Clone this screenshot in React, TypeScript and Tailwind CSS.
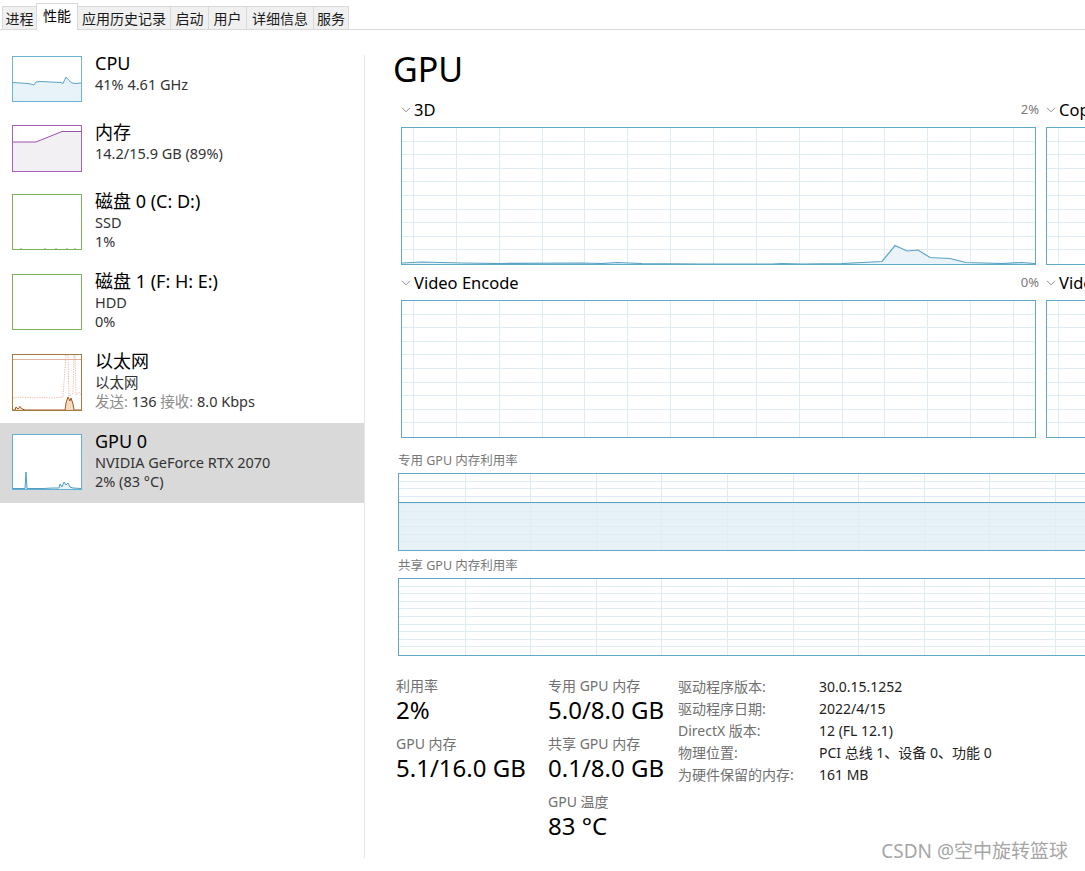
import React from "react"

const FONT = "font-['Noto_Sans','Noto_Sans_CJK_SC',sans-serif]"

const tabs = [
  { label: "进程", w: "w-[35px]" },
  { label: "性能", w: "w-[42px]", active: true },
  { label: "应用历史记录", w: "w-[94px]" },
  { label: "启动", w: "w-[39px]" },
  { label: "用户", w: "w-[39px]" },
  { label: "详细信息", w: "w-[68px]" },
  { label: "服务", w: "w-[36px]" },
]

function Tabs() {
  return (
    <div className="flex h-[30px] items-end border-b border-[#d9d9d9] pl-[2px]">
      {tabs.map((t) =>
        t.active ? (
          <div
            key={t.label}
            className={`${t.w} relative z-10 -mb-px -ml-px flex h-[27px] items-start justify-center border border-b-0 border-[#d9d9d9] bg-white pt-[3px] text-[14px] leading-[18px] text-black`}
          >
            {t.label}
          </div>
        ) : (
          <div
            key={t.label}
            className={`${t.w} -ml-px flex h-[23px] items-start justify-center border border-b-0 border-[#d9d9d9] bg-[#f0f0f0] pt-[3px] text-[14px] leading-[18px] text-[#1a1a1a] first:ml-0`}
          >
            {t.label}
          </div>
        )
      )}
    </div>
  )
}

function pts(p: number[][]) {
  return p.map((q) => q.join(",")).join(" ")
}

function CpuThumb() {
  const line = [
    [0, 25.5], [8, 26], [14, 26.5], [18, 27], [21, 28], [23, 25], [28, 24.5], [38, 25], [48, 25.5],
    [50, 26.5], [53, 20], [56, 23.5], [59, 26], [63, 26.5], [68, 26],
  ]
  return (
    <div className="h-[46px] w-[70px] border border-[#6db3d6] bg-white">
      <svg viewBox="0 0 68 44" className="block h-full w-full" preserveAspectRatio="none">
        <polygon points={pts([...line, [68, 44], [0, 44]])} fill="#e8f2f9" />
        <polyline points={pts(line)} fill="none" stroke="#5aa4c8" strokeWidth="1" />
      </svg>
    </div>
  )
}

function MemThumb() {
  const line = [[0, 16], [23, 16], [49, 5.5], [68, 5.5]]
  return (
    <div className="h-[47px] w-[70px] border border-[#a35fba] bg-white">
      <svg viewBox="0 0 68 45" className="block h-full w-full" preserveAspectRatio="none">
        <polygon points={pts([...line, [68, 45], [0, 45]])} fill="#f3f0f4" />
        <polyline points={pts(line)} fill="none" stroke="#9b50b3" strokeWidth="1" />
      </svg>
    </div>
  )
}

function DiskThumb({ ticks }: { ticks: number[] }) {
  return (
    <div className="h-[56px] w-[70px] border border-[#7db358] bg-white">
      <svg viewBox="0 0 68 54" className="block h-full w-full" preserveAspectRatio="none">
        {ticks.map((x) => (
          <line key={x} x1={x} x2={x} y1={53} y2={54} stroke="#7db358" strokeWidth="1" />
        ))}
      </svg>
    </div>
  )
}

function NetThumb() {
  const recv = [
    [0, 55], [2, 55], [3, 52], [5, 54], [7, 51.5], [9, 54], [12, 55], [52, 55], [53, 48], [55, 42],
    [57, 46], [58, 43], [60, 49], [61, 55], [68, 55],
  ]
  return (
    <div className="h-[57px] w-[70px] border border-[#a67b3f] bg-white">
      <svg viewBox="0 0 68 55" className="block h-full w-full" preserveAspectRatio="none">
        <line x1="0" x2="68" y1="4.5" y2="4.5" stroke="#e2b49f" strokeWidth="1" />
        <polyline
          points={pts([[0, 43], [10, 42], [20, 43], [30, 42.5], [40, 43], [50, 42], [53, 0], [55, 0], [56, 41], [60, 38], [61, 0], [62, 0], [63, 40], [66, 37], [68, 40]])}
          fill="none"
          stroke="#e3a48c"
          strokeWidth="0.8"
          strokeDasharray="1.2 1.2"
        />
        <polygon points={pts(recv)} fill="#f6dcc0" />
        <polyline points={pts(recv)} fill="none" stroke="#a4561e" strokeWidth="1" />
      </svg>
    </div>
  )
}

function GpuThumb() {
  const line = [
    [0, 53.5], [12, 53.5], [13, 37], [14, 53.5], [30, 53.5], [40, 53], [46, 53], [47, 49], [49, 52], [51, 47],
    [53, 50], [55, 48], [57, 52], [60, 53], [68, 53.5],
  ]
  return (
    <div className="h-[56px] w-[70px] border border-[#62b0d6] bg-white">
      <svg viewBox="0 0 68 54" className="block h-full w-full" preserveAspectRatio="none">
        <polygon points={pts([...line, [68, 54], [0, 54]])} fill="#e8f2f9" />
        <polyline points={pts(line)} fill="none" stroke="#4f9fc4" strokeWidth="1" />
      </svg>
    </div>
  )
}

type Item = {
  title: string
  lines: React.ReactNode[]
  thumb: React.ReactNode
  selected?: boolean
}

const items: Item[] = [
  { title: "CPU", lines: ["41% 4.61 GHz"], thumb: <CpuThumb /> },
  { title: "内存", lines: ["14.2/15.9 GB (89%)"], thumb: <MemThumb /> },
  { title: "磁盘 0 (C: D:)", lines: ["SSD", "1%"], thumb: <DiskThumb ticks={[8, 32, 43, 54, 62]} /> },
  { title: "磁盘 1 (F: H: E:)", lines: ["HDD", "0%"], thumb: <DiskThumb ticks={[]} /> },
  {
    title: "以太网",
    lines: [
      "以太网",
      <>
        <span className="text-[#8c8c8c]">发送:</span> 136 <span className="text-[#8c8c8c]">接收:</span> 8.0 Kbps
      </>,
    ],
    thumb: <NetThumb />,
  },
  {
    title: "GPU 0",
    lines: ["NVIDIA GeForce RTX 2070", "2% (83 °C)"],
    thumb: <GpuThumb />,
    selected: true,
  },
]

function Sidebar() {
  return (
    <div className="w-[364px] shrink-0 pt-[15px]">
      {items.map((it) => (
        <div
          key={it.title}
          className={`flex gap-[13px] pl-[12px] pt-[11px] ${it.lines.length > 1 ? "h-[80px]" : "h-[69px]"} ${it.selected ? "bg-[#d9d9d9]" : ""}`}
        >
          {it.thumb}
          <div className="-mt-[4px] flex flex-col">
            <div className="text-[18px] leading-[23px] text-black">{it.title}</div>
            {it.lines.map((l, i) => (
              <div key={i} className="text-[14.5px] leading-[19px] text-[#333]">
                {l}
              </div>
            ))}
          </div>
        </div>
      ))}
    </div>
  )
}

function Chevron() {
  return (
    <svg width="10" height="6" viewBox="0 0 10 6" className="mr-[3px]">
      <polyline points="1,0.8 5,4.8 9,0.8" fill="none" stroke="#8a8a8a" strokeWidth="1" />
    </svg>
  )
}

function Grid({ w, h, x0, dx, rows }: { w: number; h: number; x0: number; dx: number; rows: number }) {
  const xs: number[] = []
  for (let x = x0; x < w; x += dx) xs.push(Math.round(x) + 0.5)
  const ys: number[] = []
  for (let k = 1; k < rows; k++) ys.push(Math.round((h / rows) * k) - 0.5)
  return (
    <>
      {xs.map((x) => (
        <line key={"x" + x} x1={x} x2={x} y1={0} y2={h} stroke="#deedf4" strokeWidth="1" />
      ))}
      {ys.map((y) => (
        <line key={"y" + y} x1={0} x2={w} y1={y} y2={y} stroke="#deedf4" strokeWidth="1" />
      ))}
    </>
  )
}

const gpu3d = [
  [0, 135], [20, 134], [40, 134.5], [60, 135], [100, 135.5], [180, 135], [200, 135.5], [215, 134.5],
  [240, 135.5], [300, 136], [370, 136], [380, 135.5], [400, 136], [440, 135.5], [470, 134], [480, 133.5],
  [493, 117.5], [505, 123], [516, 122], [528, 129.5], [548, 130.5], [564, 134.5], [600, 135.5],
  [620, 134.5], [633, 135.5],
]

function EngineChart({ data }: { data?: number[][] }) {
  return (
    <div className="h-[138px] w-[635px] border border-[#5fa8ca] bg-white">
      <svg width="633" height="136" className="block" shapeRendering="crispEdges">
        <Grid w={633} h={136} x0={11} dx={42.86} rows={10} />
        {data && (
          <g shapeRendering="auto">
            <polygon points={pts([...data, [633, 136], [0, 136]])} fill="#e9f3f9" />
            <polyline points={pts(data)} fill="none" stroke="#5ba3c6" strokeWidth="1.2" />
          </g>
        )}
      </svg>
    </div>
  )
}

function EngineBlock({ name, pct, data }: { name: string; pct?: string; data?: number[][] }) {
  return (
    <div className="w-[635px] shrink-0">
      <div className="flex h-[22px] items-center">
        <Chevron />
        <span className="whitespace-nowrap text-[16.5px] leading-[22px] text-black">{name}</span>
        {pct && <span className="ml-auto -mr-[3px] text-[13px] text-[#7a7a7a]">{pct}</span>}
      </div>
      <div className="mt-[6px]">
        <EngineChart data={data} />
      </div>
    </div>
  )
}

function MemChart({ fillAt }: { fillAt?: number }) {
  return (
    <div className="h-[78px] w-[720px] border border-[#5fa8ca] bg-white">
      <svg width="718" height="76" className="block" shapeRendering="crispEdges">
        {fillAt !== undefined && <rect x="0" y={fillAt} width="718" height={76 - fillAt} fill="#e6f1f8" />}
        <Grid w={718} h={76} x0={65.6} dx={65.6} rows={10} />
        {fillAt !== undefined && (
          <line x1="0" x2="718" y1={fillAt + 0.5} y2={fillAt + 0.5} stroke="#5ba3c6" strokeWidth="1" />
        )}
      </svg>
    </div>
  )
}

function Stat({ label, value }: { label: string; value: string }) {
  return (
    <div className="h-[58px]">
      <div className="text-[14px] leading-[18px] text-[#707070]">{label}</div>
      <div className="text-[24px] leading-[30px] text-black">{value}</div>
    </div>
  )
}

const props = [
  ["驱动程序版本:", "30.0.15.1252"],
  ["驱动程序日期:", "2022/4/15"],
  ["DirectX 版本:", "12 (FL 12.1)"],
  ["物理位置:", "PCI 总线 1、设备 0、功能 0"],
  ["为硬件保留的内存:", "161 MB"],
]

function Detail() {
  return (
    <div className="min-w-0 flex-1 overflow-hidden pl-[28px] pt-[19px]">
      <div className="text-[34px] leading-[40px] text-black">GPU</div>

      <div className="ml-[8px] mt-[10px] flex gap-[10px]">
        <EngineBlock name="3D" pct="2%" data={gpu3d} />
        <EngineBlock name="Copy" />
      </div>
      <div className="ml-[8px] mt-[7px] flex gap-[10px]">
        <EngineBlock name="Video Encode" pct="0%" />
        <EngineBlock name="Video Decode" />
      </div>

      <div className="ml-[5px] mt-[15px]">
        <div className="text-[12.5px] leading-[16px] text-[#777]">专用 GPU 内存利用率</div>
        <div className="mt-[4px]">
          <MemChart fillAt={28} />
        </div>
        <div className="mt-[7px] text-[12.5px] leading-[16px] text-[#777]">共享 GPU 内存利用率</div>
        <div className="mt-[4px]">
          <MemChart />
        </div>
      </div>

      <div className="ml-[3px] mt-[21px] flex">
        <div className="w-[152px]">
          <Stat label="利用率" value="2%" />
          <Stat label="GPU 内存" value="5.1/16.0 GB" />
        </div>
        <div className="w-[130px]">
          <Stat label="专用 GPU 内存" value="5.0/8.0 GB" />
          <Stat label="共享 GPU 内存" value="0.1/8.0 GB" />
          <Stat label="GPU 温度" value="83 °C" />
        </div>
        <div className="-mt-[2px] flex flex-col">
          {props.map(([k, v]) => (
            <div key={k} className="flex h-[22px] items-center text-[14px]">
              <span className="w-[141px] text-[#707070]">{k}</span>
              <span className="text-[#222]">{v}</span>
            </div>
          ))}
        </div>
      </div>
    </div>
  )
}

export default function App() {
  return (
    <div className={`${FONT} relative h-[871px] w-[1085px] overflow-hidden bg-white`}>
      <Tabs />
      <div className="flex">
        <Sidebar />
        <div className="mt-[25px] h-[803px] w-px shrink-0 bg-[#e6e6e6]" />
        <Detail />
      </div>
      <div className="absolute bottom-[8px] right-[17px] text-[19px] leading-[24px] text-[#a6a6a6]">
        CSDN @空中旋转篮球
      </div>
    </div>
  )
}
